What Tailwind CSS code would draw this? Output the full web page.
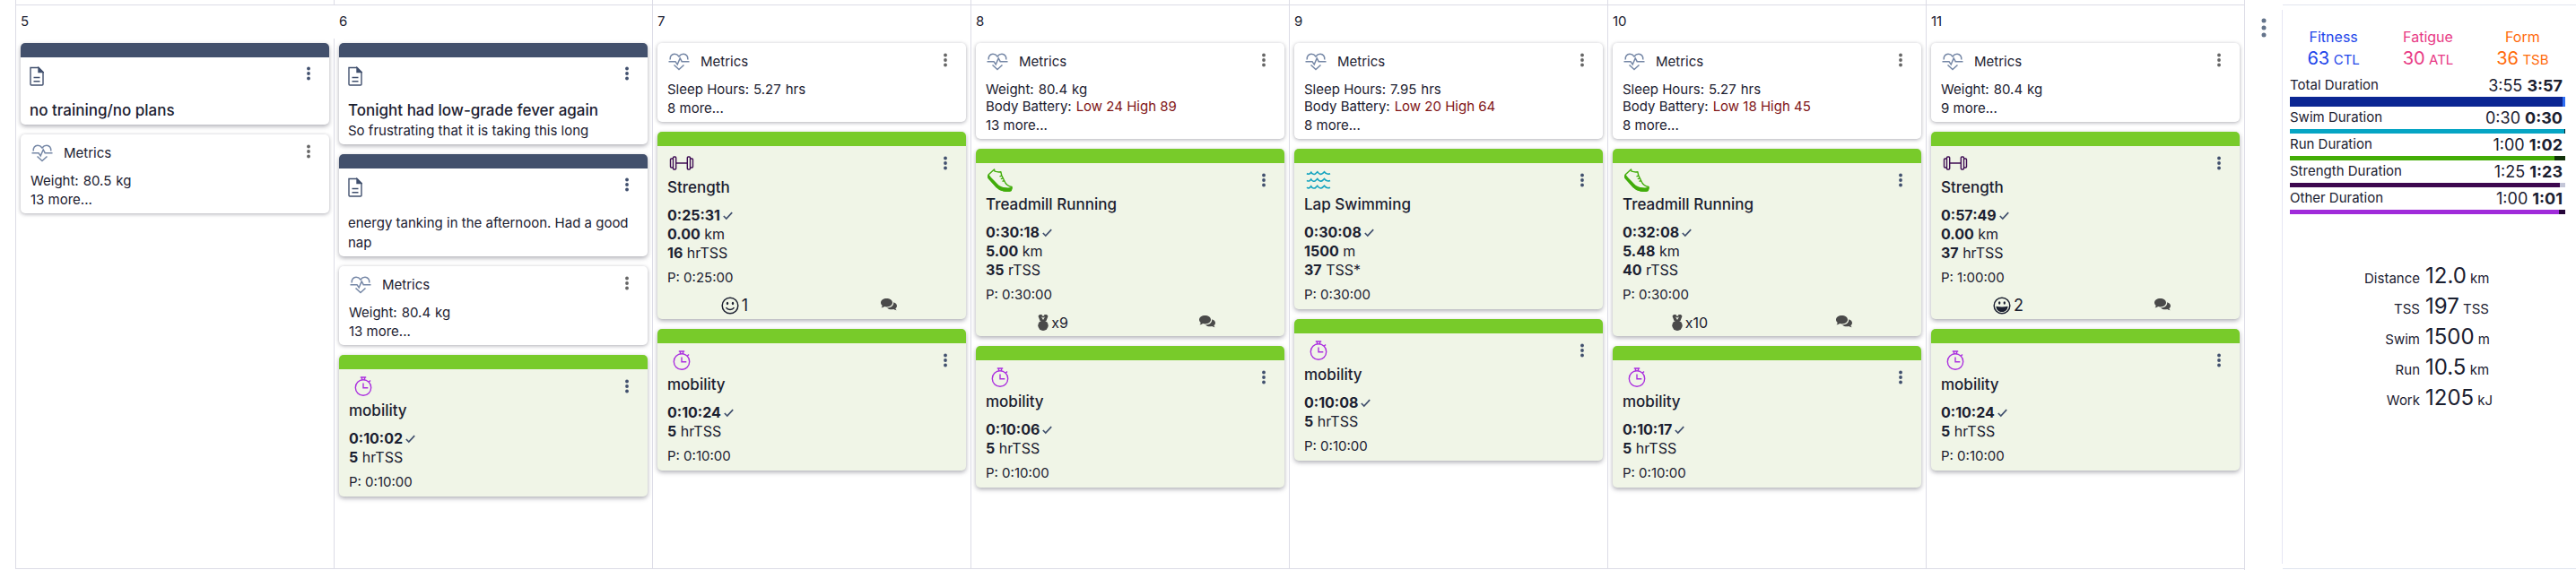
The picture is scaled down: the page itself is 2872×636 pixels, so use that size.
<!DOCTYPE html>
<html lang="en">
<head>
  <meta charset="UTF-8" />
  <meta name="viewport" content="width=device-width, initial-scale=1.0" />
  <title>Training Calendar</title>
  <script src="https://cdn.jsdelivr.net/npm/@tailwindcss/browser@4"></script>
</head>
<body class="bg-white font-['Inter',sans-serif] text-[#1b2030]">
  <main class="flex min-h-screen">
    <!-- Calendar -->
    <section class="flex flex-1 flex-col pl-[17px]">
      <div class="grid h-[5px] grid-cols-7">
        <div class="border-l border-[#dcdce6]"></div>
        <div class="border-l border-[#dcdce6]"></div>
        <div class="border-l border-[#dcdce6]"></div>
        <div class="border-l border-[#dcdce6]"></div>
        <div class="border-l border-[#dcdce6]"></div>
        <div class="border-l border-[#dcdce6]"></div>
        <div class="border-l border-[#dcdce6]"></div>
      </div>
      <div id="week" class="grid flex-1 grid-cols-7 border-y border-[#dcdce6]">
        <!-- Days will be rendered here -->
      </div>
      <div class="h-px"></div>
    </section>

    <!-- Week menu -->
    <div class="w-[42px] border-l border-[#dcdce6] pt-[20px] pl-[18px]">
      <button type="button" aria-label="Week options" class="block">
        <svg class="h-[22px] w-[6px] fill-[#64748b]" viewBox="0 0 6 22"><circle cx="3" cy="3" r="2.5" /><circle cx="3" cy="11" r="2.5" /><circle cx="3" cy="19" r="2.5" /></svg>
      </button>
    </div>

    <!-- Week summary -->
    <aside class="flex w-[328px] flex-col pt-[5px] pb-px">
      <div class="ml-px border-t border-[#e2e5ee]"></div>
      <div class="my-[5px] flex-1 border-l border-[#e6e6f4] pt-[18px]">
        <div class="mr-[7px] ml-1 grid grid-cols-3 text-center text-base leading-6">
          <div class="text-[#1d45ea]">Fitness<div><span class="text-xl leading-6">63</span> <span class="text-[15px]">CTL</span></div></div>
          <div class="text-[#e83a85]">Fatigue<div><span class="text-xl leading-6">30</span> <span class="text-[15px]">ATL</span></div></div>
          <div class="text-[#ff6a0a]">Form<div><span class="text-xl leading-6">36</span> <span class="text-[15px]">TSB</span></div></div>
        </div>
        <div id="durations" class="mt-1 mr-3 ml-2"></div>
        <table class="mt-[53px] ml-[77px]">
          <tbody id="totals"></tbody>
        </table>
      </div>
      <div class="ml-px border-t border-[#dfe4ee]"></div>
    </aside>
  </main>

  <script>
    const icons = {
      note: `<svg class="h-[22px] w-[16px]" viewBox="0 0 16 22" fill="none" stroke="#41506e" stroke-width="1.4"><path d="M1 1.5h9l5 5V20a1 1 0 0 1-1 1H2a1 1 0 0 1-1-1z" /><path d="M10 1.5v5h5z" fill="#41506e" /><path d="M4.5 12.5h7M4.5 16.7h7" /></svg>`,
      metrics: `<svg class="h-[20px] w-[24px]" viewBox="0 0 24 20" fill="none" stroke="#7587a6" stroke-width="1.5"><path d="M2.3 7.5C1.7 4 4 1.2 7 1.2c2.200 0 3.800 1.100 5 2.800 1.200-1.700 2.800-2.800 5-2.800 3 0 5.300 2.800 4.700 6.300" /><path d="M.5 9.700h7.500l2.200 3.300 3-7 2 3.700h8.300" /><path d="M6.500 13.500l5.500 5 5.500-5" /></svg>`,
      strength: `<svg class="h-[16px] w-[28px]" viewBox="0 0 28 16" fill="none" stroke="#3f0d54" stroke-width="1.400"><rect x="4.500" y="1" width="3.200" height="14" rx="1" /><path d="M4.500 3H2.500a1 1 0 0 0-1 1v8a1 1 0 0 0 1 1h2" /><rect x="20.300" y="1" width="3.200" height="14" rx="1" /><path d="M23.500 3h2a1 1 0 0 1 1 1v8a1 1 0 0 1-1 1h-2M7.700 8h12.600" /></svg>`,
      run: `<svg class="h-[26px] w-[28px]" viewBox="0 0 28 26" fill="none" stroke="#42ad0b" stroke-width="1.400" stroke-linejoin="round"><path d="M7.500 1L1.500 6.500C.5 8 .6 9.700 1.500 11l8.500 9.500c2 2.200 5 3.700 8 4.200 3 .5 6 .6 8-.2.8-1 1.300-2.500 1-4-3.500-.7-6-2.500-7.500-5.200L15.700 7.500l-.8-3.700c-2.200.3-4.700.1-6.900-.6z" /><path d="M1.300 7.500c2.200 3.500 5.700 6.300 8.700 9.700 2.800 3.100 6.200 4.600 10.500 4.800 2.500.2 4.700.1 6.300-.4l-.8 2.900c-2 .8-5 .7-8 .2-3-.5-6-2-8-4.200L1.500 11c-.8-1-.9-2.300-.2-3.500z" fill="#42ad0b" /><path d="M16 8l-2.500.8M17.300 10.800l-2.500.8M18.800 13.500l-2.300.8" /></svg>`,
      swim: `<svg class="h-[22px] w-[28px]" viewBox="0 0 28 22" fill="none" stroke="#17a5c0" stroke-width="1.600"><path d="M1 3.500c2 1.500 3.500.5 4.800-1.300C7 4.500 9.500 5.200 11 3.500l1.800-1.800c1.600 2.600 4.200 3.600 6 1.600L20.500 1.700c1.700 2.500 4 3 6.500 2" /><path d="M1 11.300c2 1.500 3.500.5 4.800-1.300 1.200 2.300 3.700 3 5.200 1.300l1.800-1.800c1.600 2.600 4.200 3.600 6 1.600l1.700-1.600c1.700 2.500 4 3 6.500 2" /><path d="M1 19.100c2 1.500 3.500.5 4.800-1.300 1.200 2.300 3.700 3 5.200 1.300l1.800-1.800c1.600 2.600 4.200 3.600 6 1.600l1.700-1.600c1.700 2.500 4 3 6.500 2" /></svg>`,
      mobility: `<svg class="ml-1 h-[22px] w-[20px]" viewBox="0 0 20 22" fill="none" stroke="#ab30df" stroke-width="1.400"><circle cx="10" cy="12.500" r="8.700" /><path d="M6.800 1h6.400M8.500 1.500V4M11.500 1.500V4M16.200 6.300l1.800-1.800M10 7.500v5.300h5.300" /></svg>`,
      check: `<svg class="ml-[3px] inline h-[10px] w-[11px] -translate-y-px" viewBox="0 0 11 10" fill="none" stroke="#41506e" stroke-width="1.700"><path d="M.8 5l3 3L10.200 1.200" /></svg>`,
      smile: `<svg class="h-[20px] w-[20px]" viewBox="0 0 20 20" fill="none" stroke="#1b2030" stroke-width="1.500"><circle cx="10" cy="10" r="8.800" /><path d="M5.500 12.200c2 3 7 3 9 0" /><g fill="#1b2030" stroke="none"><ellipse cx="7" cy="7.500" rx="1.200" ry="1.700" /><ellipse cx="13" cy="7.500" rx="1.200" ry="1.700" /></g></svg>`,
      grin: `<svg class="h-[20px] w-[20px]" viewBox="0 0 20 20" fill="none" stroke="#1b2030" stroke-width="1.500"><circle cx="10" cy="10" r="8.800" /><g fill="#1b2030" stroke="none"><ellipse cx="7.200" cy="7" rx="1.200" ry="1.700" /><ellipse cx="12.800" cy="7" rx="1.200" ry="1.700" /><path d="M3.500 10.700c4 1 9 1 13 0 0 4-3 6.300-6.500 6.300s-6.500-2.300-6.500-6.300z" /></g></svg>`,
      medal: `<svg class="h-[18px] w-[12px] fill-[#4a4a4a]" viewBox="0 0 12 18"><path d="M2 0h2.800v1.500h2.400V0H10l1.500 1.800-2 5.200H2.500l-2-5.200z" /><circle cx="6" cy="12.200" r="5.700" /><path d="M4 2.500l2 3.500 2-3.500-2 1z" fill="#f0f5e7" /></svg>`,
      comments: `<svg class="h-[14px] w-[18px] fill-[#4a4a4a]" viewBox="0 0 18 14"><path d="M6.500 0C10 0 13 2 13 4.700S10 9.400 6.500 9.400c-.9 0-1.700-.1-2.400-.3-1 .8-2.200 1.200-3.600 1.200.8-.8 1.200-1.500 1.300-2.200C.7 7.200 0 6 0 4.700 0 2 3 0 6.500 0z" /><path d="M14.200 4.200C16.500 4.900 18 6.300 18 8.200c0 1.200-.6 2.200-1.600 3 .1.600.5 1.300 1.300 2-1.400 0-2.600-.4-3.500-1.100-3 .6-5.800-.1-7.200-1.700 4.500 0 7.600-2.600 7.200-6.200z" /></svg>`
    };

    // Week data
    const mobility = (time) => ({ type: 'workout', icon: 'mobility', title: 'mobility', time, stats: [['5', 'hrTSS']], planned: '0:10:00' });

    const days = [
      { date: 5, cards: [
        { type: 'note', title: 'no training/no plans' },
        { type: 'metrics', lines: [['Weight:', '80.5', 'kg']], more: 13 }
      ] },
      { date: 6, cards: [
        { type: 'note', title: 'Tonight had low-grade fever again', body: 'So frustrating that it is taking this long' },
        { type: 'note', body: 'energy tanking in the afternoon. Had a good nap' },
        { type: 'metrics', lines: [['Weight:', '80.4', 'kg']], more: 13 },
        mobility('0:10:02')
      ] },
      { date: 7, cards: [
        { type: 'metrics', lines: [['Sleep Hours:', '5.27', 'hrs']], more: 8 },
        { type: 'workout', icon: 'strength', title: 'Strength', time: '0:25:31', stats: [['0.00', 'km'], ['16', 'hrTSS']], planned: '0:25:00', badge: 'smile', count: '1' },
        mobility('0:10:24')
      ] },
      { date: 8, cards: [
        { type: 'metrics', lines: [['Weight:', '80.4', 'kg']], battery: 'Low 24 High 89', more: 13 },
        { type: 'workout', icon: 'run', title: 'Treadmill Running', time: '0:30:18', stats: [['5.00', 'km'], ['35', 'rTSS']], planned: '0:30:00', badge: 'medal', count: 'x9' },
        mobility('0:10:06')
      ] },
      { date: 9, cards: [
        { type: 'metrics', lines: [['Sleep Hours:', '7.95', 'hrs']], battery: 'Low 20 High 64', more: 8 },
        { type: 'workout', icon: 'swim', title: 'Lap Swimming', time: '0:30:08', stats: [['1500', 'm'], ['37', 'TSS*']], planned: '0:30:00' },
        mobility('0:10:08')
      ] },
      { date: 10, cards: [
        { type: 'metrics', lines: [['Sleep Hours:', '5.27', 'hrs']], battery: 'Low 18 High 45', more: 8 },
        { type: 'workout', icon: 'run', title: 'Treadmill Running', time: '0:32:08', stats: [['5.48', 'km'], ['40', 'rTSS']], planned: '0:30:00', badge: 'medal', count: 'x10' },
        mobility('0:10:17')
      ] },
      { date: 11, cards: [
        { type: 'metrics', lines: [['Weight:', '80.4', 'kg']], more: 9 },
        { type: 'workout', icon: 'strength', title: 'Strength', time: '0:57:49', stats: [['0.00', 'km'], ['37', 'hrTSS']], planned: '1:00:00', badge: 'grin', count: '2' },
        mobility('0:10:24')
      ] }
    ];

    const durations = [
      { label: 'Total Duration', planned: '3:55', done: '3:57', percent: 99, size: 'h-[11px]', color: 'bg-[#0b2693]', rest: 'bg-[#2f6ff5]' },
      { label: 'Swim Duration', planned: '0:30', done: '0:30', percent: 99.6, size: 'h-[5px]', color: 'bg-[#06a5c4]', rest: 'bg-[#04242c]' },
      { label: 'Run Duration', planned: '1:00', done: '1:02', percent: 96, size: 'h-[5px]', color: 'bg-[#43ad06]', rest: 'bg-[#12330a]' },
      { label: 'Strength Duration', planned: '1:25', done: '1:23', percent: 98, size: 'h-[5px]', color: 'bg-[#3d084f]', rest: 'bg-[#c4c6d8]' },
      { label: 'Other Duration', planned: '1:00', done: '1:01', percent: 97.7, size: 'h-[5px]', color: 'bg-[#a02bda]', rest: 'bg-[#26063a]' }
    ];

    const totals = [
      ['Distance', '12.0', 'km'],
      ['TSS', '197', 'TSS'],
      ['Swim', '1500', 'm'],
      ['Run', '10.5', 'km'],
      ['Work', '1205', 'kJ']
    ];

    function renderMenu(color) {
      return `
        <button type="button" aria-label="More options" class="block shrink-0">
          <svg class="h-[16px] w-[4px] ${color}" viewBox="0 0 4 16"><circle cx="2" cy="2.500" r="1.900" /><circle cx="2" cy="8" r="1.900" /><circle cx="2" cy="13.500" r="1.900" /></svg>
        </button>
      `;
    }

    function renderNote(card) {
      return `
        <article class="overflow-hidden rounded-[5px] bg-white pb-1 shadow-[0_2px_5px_rgba(20,20,40,0.35)]">
          <div class="h-4 bg-[#42506c]"></div>
          <div class="flex h-[47px] items-start justify-between pt-[10px] pr-[21px] pl-[10px]">
            ${icons.note}
            ${renderMenu('fill-[#41506e]')}
          </div>
          ${card.title ? `<h3 class="px-[10px] text-[17px] leading-6 font-medium">${card.title}</h3>` : '<div class="h-[3px]"></div>'}
          ${card.body ? `<p class="px-[10px] text-[15px] leading-[22px]">${card.body}</p>` : ''}
        </article>
      `;
    }

    function renderMetrics(card) {
      return `
        <article class="rounded-[5px] bg-white px-[11px] pb-1 text-[15px] leading-[18px] shadow-[0_1px_4px_rgba(20,20,40,0.35)]">
          <div class="flex h-[43px] items-start pt-[11px] pr-[10px]">
            <span class="ml-px">${icons.metrics}</span>
            <h3 class="ml-3 flex-1 leading-5">Metrics</h3>
            ${renderMenu('fill-[#666666]')}
          </div>
          ${card.lines.map(([label, value, unit]) => `<div class="flex gap-[5px]"><span>${label}</span><span>${value}</span><span>${unit}</span></div>`).join('')}
          ${card.battery ? `<div class="mt-px flex gap-[5px]"><span>Body Battery:</span><span class="text-[#7f1416]">${card.battery}</span></div>` : ''}
          <div class="mt-px leading-[22px]">${card.more} more...</div>
        </article>
      `;
    }

    function renderWorkout(card) {
      return `
        <article class="overflow-hidden rounded-[5px] bg-[#f0f5e7] shadow-[0_2px_5px_rgba(20,20,40,0.35)]">
          <div class="h-4 bg-[#78cb2a]"></div>
          <div class="flex h-[34px] items-center justify-between pt-1 pr-[21px] pl-[13px]">
            ${icons[card.icon]}
            ${renderMenu('fill-[#41506e]')}
          </div>
          <div class="px-[11px] pb-[5px]">
            <h3 class="text-[17px] leading-6 font-medium">${card.title}</h3>
            <div class="mt-[9px] text-base leading-[21px]">
              <div><b class="font-bold">${card.time}</b>${icons.check}</div>
              ${card.stats.map(([value, unit]) => `<div><b class="font-bold">${value}</b> ${unit}</div>`).join('')}
            </div>
            <div class="mt-[6px] text-[15px] leading-[22px]">P: ${card.planned}</div>
          </div>
          ${card.badge ? `
          <div class="grid h-[30px] grid-cols-2 items-start">
            <div class="flex items-center justify-center gap-[3px] ${card.badge === 'medal' ? 'text-base' : 'text-lg'} leading-[30px]">${icons[card.badge]}${card.count}</div>
            <div class="flex h-7 items-center justify-center">${icons.comments}</div>
          </div>` : ''}
        </article>
      `;
    }

    const renderers = { note: renderNote, metrics: renderMetrics, workout: renderWorkout };

    function renderDay(day) {
      return `
        <div class="flex flex-col">
          <div class="h-[37px] border-l pt-[6px] pl-[5px] text-[15px] leading-6 ${day.date === 6 ? 'border-transparent' : 'border-[#dcdce6]'}">${day.date}</div>
          <div class="flex flex-1 flex-col gap-[11px] border-l border-[#dcdce6] px-[5px] pt-[5px]">
            ${day.cards.map(card => renderers[card.type](card)).join('')}
          </div>
        </div>
      `;
    }

    function renderDuration(row) {
      return `
        <div>
          <div class="flex h-[25px] items-center justify-between pr-[3px]">
            <span class="text-[15px]">${row.label}</span>
            <span class="text-lg">${row.planned} <b class="font-bold">${row.done}</b></span>
          </div>
          <div class="${row.size} ${row.rest}"><div class="${row.size} ${row.color}" style="width: ${row.percent}%"></div></div>
        </div>
      `;
    }

    function renderTotal([label, value, unit]) {
      return `
        <tr class="h-[34px] text-[15px]">
          <th scope="row" class="w-[76px] p-0 text-right align-baseline font-normal">${label}</th>
          <td class="py-0 pl-[6px] align-baseline"><span class="text-2xl leading-8">${value}</span> ${unit}</td>
        </tr>
      `;
    }

    document.getElementById('week').innerHTML = days.map(renderDay).join('');
    document.getElementById('durations').innerHTML = durations.map(renderDuration).join('');
    document.getElementById('totals').innerHTML = totals.map(renderTotal).join('');
  </script>
</body>
</html>
